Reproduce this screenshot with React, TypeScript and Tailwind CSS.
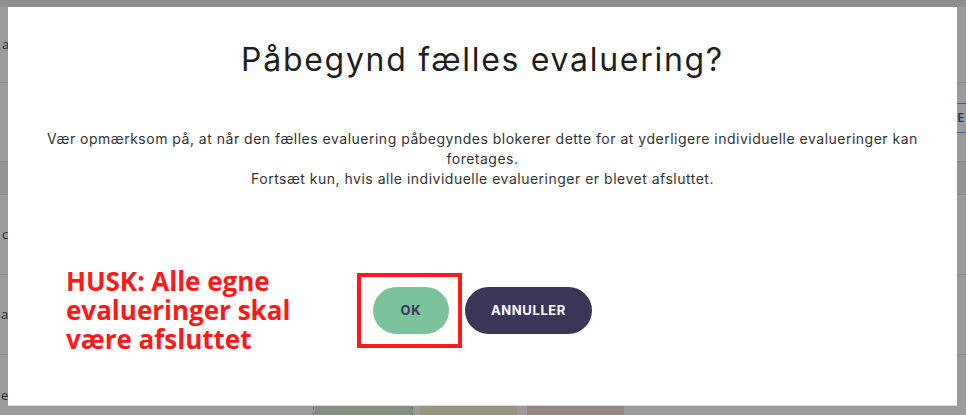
const rowText = "text-[13px] text-[#2b2b2b] font-['Open_Sans',sans-serif]";

function Backdrop() {
  return (
    <div className="flex h-[415px] w-[966px] flex-col overflow-hidden bg-[#9b9b9b]">
      <div className="h-[7px] shrink-0 bg-[#8e8e8e]" />
      <div className="flex h-[76px] shrink-0 items-center border-b border-[#8c8c8c] pl-[2px]">
        <span className={rowText}>an</span>
      </div>
      <div className="flex h-[79px] shrink-0 items-center justify-end border-b border-[#8c8c8c]">
        <div className="mb-[8px] flex h-[30px] w-[12px] items-center border-y border-[#3f6584] pl-[3px] text-[13px] font-semibold text-[#1f3e58]">
          E
        </div>
      </div>
      <div className="h-[33px] shrink-0 border-b border-[#8c8c8c] bg-[#939393]" />
      <div className="flex h-[80px] shrink-0 items-center border-b border-[#8c8c8c] pl-[2px]">
        <span className={rowText}>co</span>
      </div>
      <div className="flex h-[80px] shrink-0 items-center border-b border-[#8c8c8c] pl-[1px]">
        <span className={rowText}>ar</span>
      </div>
      <div className="flex flex-1 items-stretch">
        <div className="flex w-[313px] items-end pb-[10px] pl-[1px]">
          <span className={rowText}>e</span>
        </div>
        <div className="w-[2px] border-l border-dashed border-[#6f6f6f]" />
        <div className="w-[97px] bg-[#859083]" />
        <div className="w-[8px] border-l border-dashed border-[#6f6f6f]" />
        <div className="w-[97px] bg-[#98977b]" />
        <div className="w-[10px]" />
        <div className="w-[97px] bg-[#978584]" />
      </div>
    </div>
  );
}

export default function App() {
  return (
    <div className="relative h-[415px] w-[966px] overflow-hidden">
      <Backdrop />
      <div className="absolute inset-0 pb-[9px] pl-[8px] pr-[9px] pt-[7px]">
        <div className="relative flex h-full flex-col items-center border-b border-[#dcdcdc] bg-white font-['Inter',sans-serif]">
          <h1 className="mt-[35px] text-[32px] leading-[36px] tracking-[1.7px] text-[#1e1e1e]">
            Påbegynd fælles evaluering?
          </h1>
          <div className="mt-[51px] flex flex-col items-center text-[14px] leading-[20px] tracking-[0.5px] text-[#333]">
            <p className="whitespace-nowrap">
              Vær opmærksom på, at når den fælles evaluering påbegyndes blokerer dette for at yderligere
              individuelle evalueringer kan
            </p>
            <p className="whitespace-nowrap">foretages.</p>
            <p className="whitespace-nowrap">Fortsæt kun, hvis alle individuelle evalueringer er blevet afsluttet.</p>
          </div>
          <div className="mt-[98px] flex gap-[16px]">
            <div className="relative">
              <button className="h-[47px] w-[76px] rounded-full bg-[#7cc39d] text-[13px] font-bold tracking-[0.8px] text-[#3a3556]">
                OK
              </button>
              <div className="pointer-events-none absolute -bottom-[14px] -left-[16px] -right-[13px] -top-[14px] border-[4px] border-[#ff1a1a]" />
            </div>
            <button className="h-[47px] w-[127px] rounded-full bg-[#3b3657] text-[13px] font-bold tracking-[0.6px] text-white">
              ANNULLER
            </button>
          </div>
          <p className="absolute left-[58px] top-[260px] font-['Open_Sans',sans-serif] text-[26px] font-bold leading-[29px] text-[#ff1a1a]">
            HUSK: Alle egne
            <br />
            evalueringer skal
            <br />
            være afsluttet
          </p>
        </div>
      </div>
    </div>
  );
}
